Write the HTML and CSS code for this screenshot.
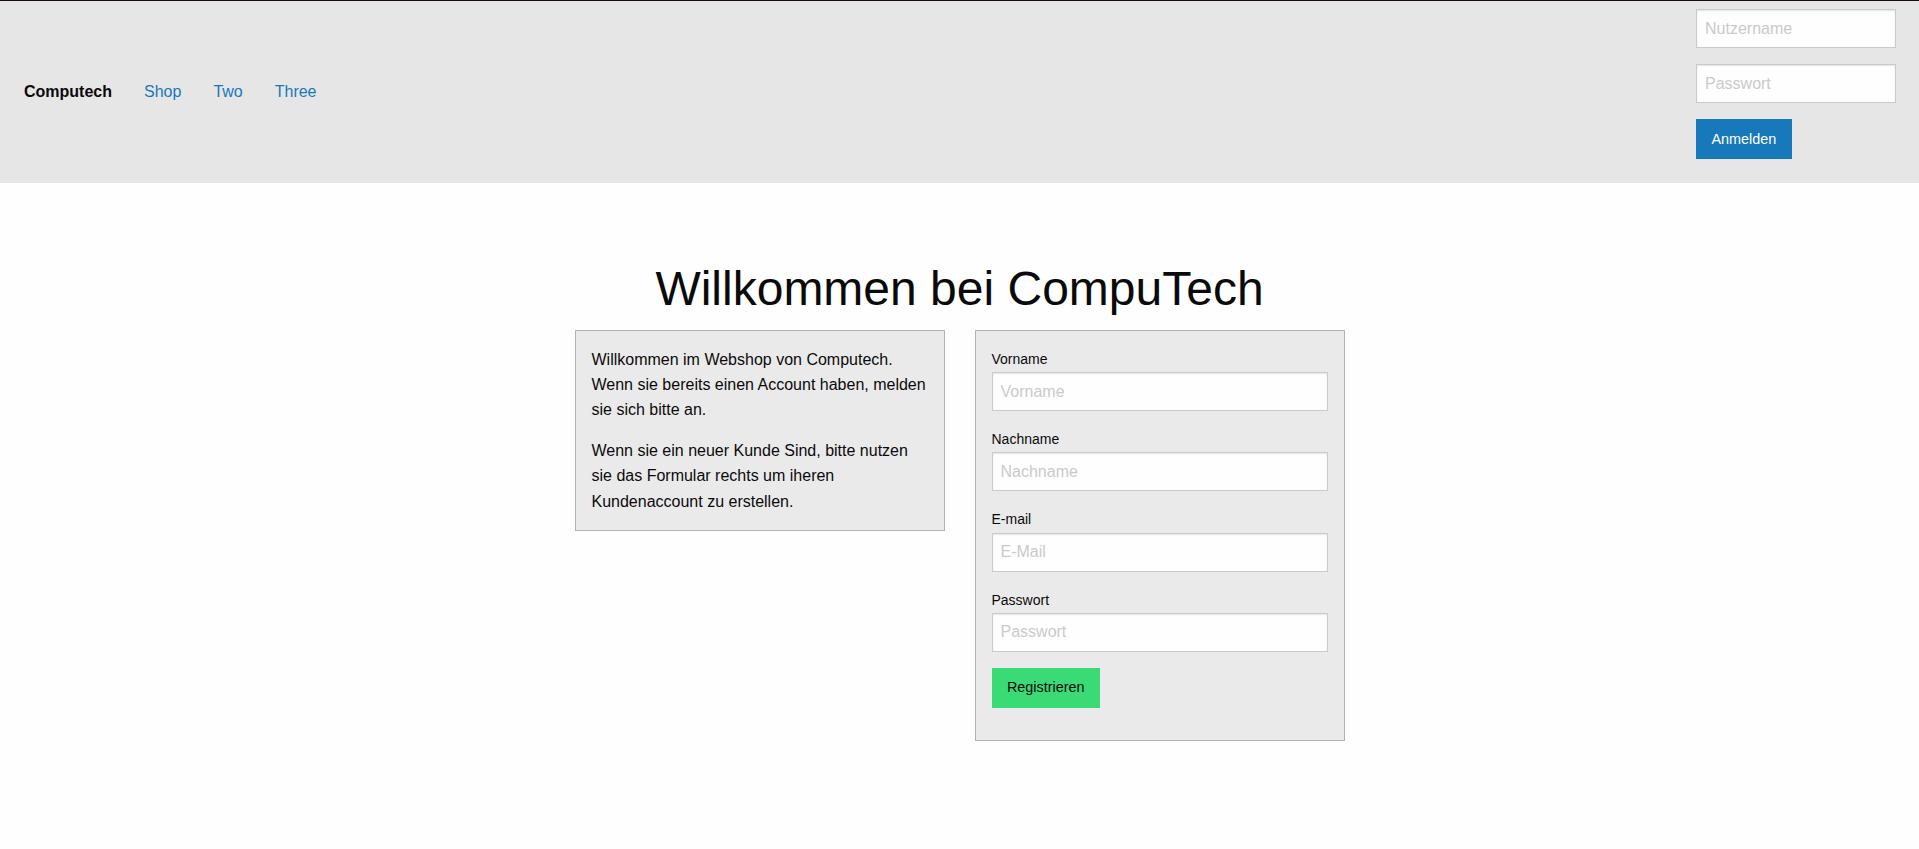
FILE: index.html
```html
<!DOCTYPE html>
<html lang="de">
<head>
<meta charset="utf-8">
<title>Computech</title>
<link rel="stylesheet" href="styles.css">
</head>
<body>
<header class="top-bar">
  <ul class="menu">
    <li class="menu-text">Computech</li>
    <li><a href="#">Shop</a></li>
    <li><a href="#">Two</a></li>
    <li><a href="#">Three</a></li>
  </ul>
  <form class="login">
    <input type="text" placeholder="Nutzername">
    <input type="password" placeholder="Passwort">
    <button type="button" class="button primary">Anmelden</button>
  </form>
</header>
<main class="container">
  <h1>Willkommen bei CompuTech</h1>
  <div class="grid">
    <div class="cell">
      <div class="callout">
        <p>Willkommen im Webshop von Computech. Wenn sie bereits einen Account haben, melden sie sich bitte an.</p>
        <p>Wenn sie ein neuer Kunde Sind, bitte nutzen sie das Formular rechts um iheren Kundenaccount zu erstellen.</p>
      </div>
    </div>
    <div class="cell">
      <div class="callout">
        <form class="register">
          <label>Vorname<input type="text" placeholder="Vorname"></label>
          <label>Nachname<input type="text" placeholder="Nachname"></label>
          <label>E-mail<input type="email" placeholder="E-Mail"></label>
          <label>Passwort<input type="password" placeholder="Passwort"></label>
          <button type="button" class="button success">Registrieren</button>
        </form>
      </div>
    </div>
  </div>
</main>
</body>
</html>
```
FILE: styles.css
```css
* { box-sizing: border-box; }
body {
  margin: 0;
  font-family: "Liberation Sans", Arial, sans-serif;
  color: #0a0a0a;
  background: #fefefe;
  font-size: 16px;
}
.top-bar {
  display: flex;
  justify-content: space-between;
  align-items: center;
  padding: 8px;
  background: #e6e6e6;
  border-top: 1px solid #1c0b0b;
}
.menu {
  display: flex;
  align-items: center;
  list-style: none;
  margin: 0;
  padding: 0;
}
.menu li { line-height: 1; }
.menu-text {
  font-weight: bold;
  padding: 11.2px 16px;
}
.menu a {
  display: block;
  padding: 11.2px 16px;
  color: #1779ba;
  text-decoration: none;
}
.login {
  display: flex;
  flex-direction: column;
  align-items: flex-start;
  margin-right: 15px;
}
input {
  display: block;
  width: 100%;
  height: 39px;
  padding: 8px;
  margin: 0 0 16px;
  border: 1px solid #cacaca;
  background: #fefefe;
  box-shadow: inset 0 1px 2px rgba(10,10,10,0.1);
  font-family: inherit;
  font-size: 16px;
  color: #0a0a0a;
  border-radius: 0;
}
input::placeholder { color: #cacaca; }
.login input { width: 200px; }
.button {
  display: inline-block;
  margin: 0 0 16px;
  padding: 11.7px 14.4px;
  border: 1px solid transparent;
  border-radius: 0;
  font-family: inherit;
  font-size: 14.4px;
  line-height: 1;
  cursor: pointer;
}
.button.primary { background: #1779ba; color: #fefefe; }
.button.success { background: #3adb76; color: #0a0a0a; }
.container {
  width: 800px;
  margin: 0 auto;
  padding-top: 72px;
}
h1 {
  margin: 0 0 8px;
  font-size: 48px;
  font-weight: normal;
  line-height: 1.4;
  text-align: center;
}
.grid {
  display: flex;
  align-items: flex-start;
}
.cell {
  width: 400px;
  padding: 0 15px;
}
.callout {
  background: #eaeaea;
  border: 1px solid rgba(10,10,10,0.25);
  padding: 16px;
}
.callout p {
  margin: 0 0 16px;
  line-height: 1.57;
}
.callout p:last-child { margin-bottom: 0; }
.register label {
  display: block;
  font-size: 14px;
  line-height: 1.8;
}
```
